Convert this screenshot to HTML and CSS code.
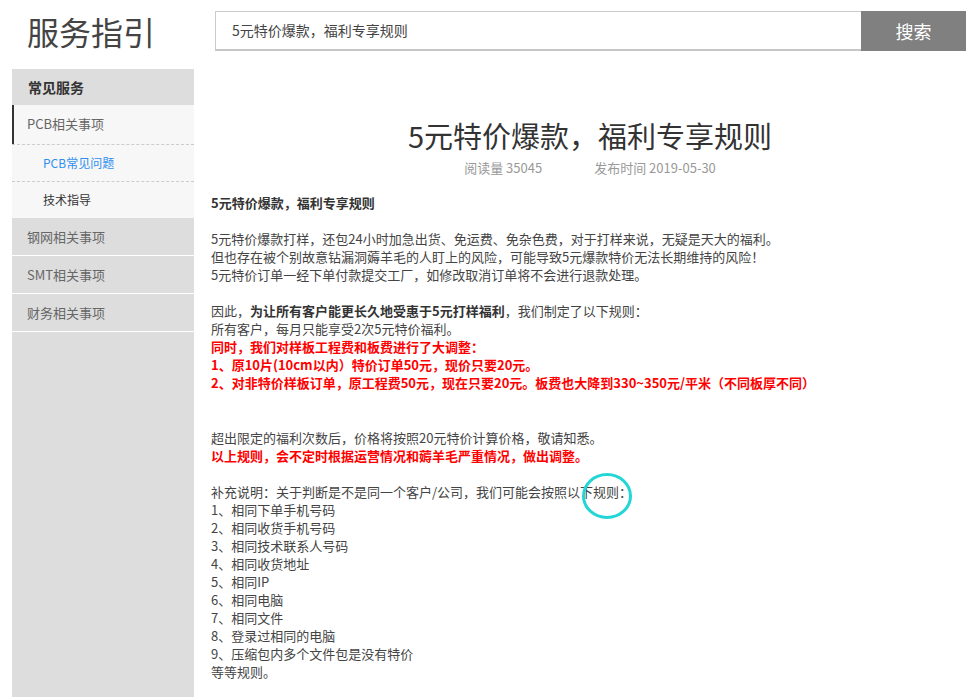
FILE: index.html
```html
<!DOCTYPE html>
<html lang="zh-CN">
<head>
<meta charset="utf-8">
<title>服务指引</title>
<link rel="stylesheet" href="styles.css">
</head>
<body>
<header class="top">
  <div class="logo">服务指引</div>
  <form class="search">
    <div class="search-input">5元特价爆款，福利专享规则</div>
    <button type="button" class="search-btn">搜索</button>
  </form>
</header>
<div class="page">
  <aside class="side">
    <div class="side-head">常见服务</div>
    <div class="group active">
      <div class="group-title">PCB相关事项</div>
      <div class="sub current">PCB常见问题</div>
      <div class="sub">技术指导</div>
    </div>
    <div class="group"><div class="group-title">钢网相关事项</div></div>
    <div class="group"><div class="group-title">SMT相关事项</div></div>
    <div class="group"><div class="group-title">财务相关事项</div></div>
  </aside>
  <main class="main">
    <h1 class="title">5元特价爆款，福利专享规则</h1>
    <div class="meta"><span>阅读量 35045</span><span>发布时间 2019-05-30</span></div>
    <div class="article">
      <p><b>5元特价爆款，福利专享规则</b></p>
      <p>5元特价爆款打样，还包24小时加急出货、免运费、免杂色费，对于打样来说，无疑是天大的福利。<br>但也存在被个别故意钻漏洞薅羊毛的人盯上的风险，可能导致5元爆款特价无法长期维持的风险！<br>5元特价订单一经下单付款提交工厂，如修改取消订单将不会进行退款处理。</p>
      <p class="gap2">因此，<b>为让所有客户能更长久地受惠于5元打样福利</b>，我们制定了以下规则：<br>所有客户，每月只能享受2次5元特价福利。<br><b class="red">同时，我们对样板工程费和板费进行了大调整：</b><br><b class="red">1、原10片(10cm以内）特价订单50元，现价只要20元。</b><br><b class="red">2、对非特价样板订单，原工程费50元，现在只要20元。板费也大降到330~350元/平米（不同板厚不同）</b></p>
      <p>超出限定的福利次数后，价格将按照20元特价计算价格，敬请知悉。<br><b class="red">以上规则，会不定时根据运营情况和薅羊毛严重情况，做出调整。</b></p>
      <p>补充说明：关于判断是不是同一个客户/公司，我们可能会按照以下规则：<br>1、相同下单手机号码<br>2、相同收货手机号码<br>3、相同技术联系人号码<br>4、相同收货地址<br>5、相同IP<br>6、相同电脑<br>7、相同文件<br>8、登录过相同的电脑<br>9、压缩包内多个文件包是没有特价<br>等等规则。</p>
    </div>
  </main>
</div>
<svg class="mark" width="56" height="50" viewBox="0 0 56 50"><ellipse cx="28" cy="25" rx="23.5" ry="21.5" fill="none" stroke="#22d6d6" stroke-width="3"/></svg>
</body>
</html>
```
FILE: styles.css
```css
* { box-sizing: border-box; }
html, body { margin: 0; padding: 0; }
body {
  font-family: "Microsoft YaHei", "Noto Sans CJK SC", "Noto Sans", sans-serif;
  color: #444;
  background: #fff;
  width: 980px;
  height: 697px;
  overflow: hidden;
  position: relative;
}
.top {
  display: flex;
  align-items: center;
  height: 69px;
  padding-top: 4px;
}
.logo {
  width: 215px;
  padding-left: 27px;
  font-size: 32px;
  color: #444;
  line-height: 40px;
  margin-top: -12px;
}
.search {
  display: flex;
  margin: 0;
  margin-top: -12px;
  height: 40px;
}
.search-input {
  width: 646px;
  height: 40px;
  border: 1px solid #ccc;
  border-bottom: 2px solid #c6c6c6;
  border-right: none;
  padding-left: 16px;
  font-size: 14px;
  line-height: 37px;
  color: #444;
}
.search-btn {
  width: 105px;
  height: 40px;
  border: none;
  background: #808080;
  color: #fff;
  font-family: inherit;
  font-size: 18px;
  padding: 0;
}
.page {
  display: flex;
  height: 628px;
}
.side {
  margin-left: 12px;
  width: 182px;
  background: #dddddd;
  font-size: 13px;
}
.side-head {
  height: 36px;
  line-height: 36px;
  padding-left: 16px;
  font-size: 14px;
  font-weight: bold;
  color: #333;
}
.group {
  border-bottom: 1px solid #fff;
}
.group-title {
  height: 37px;
  line-height: 37px;
  padding-left: 15px;
  color: #666;
}
.group.active {
  background: #f7f7f7;
  border-bottom: none;
}
.group.active .group-title {
  border-left: 2px solid #333;
  padding-left: 13px;
  height: 39px;
  line-height: 38px;
}
.sub {
  height: 37px;
  line-height: 36px;
  padding-left: 31px;
  font-size: 12px;
  color: #333;
  border-top: 1px dashed #ccc;
}
.sub.current { color: #2f8ff0; }
.main {
  flex: 1;
  padding: 46px 11px 0 17px;
}
.title {
  margin: 0;
  text-align: center;
  font-size: 29px;
  font-weight: normal;
  color: #333;
  line-height: 40px;
}
.meta {
  display: flex;
  justify-content: center;
  gap: 52px;
  font-size: 13px;
  color: #999;
  line-height: 20px;
  margin-top: 3px;
}
.article {
  margin-top: 16px;
  font-size: 13px;
  line-height: 18px;
  color: #444;
}
.article p { margin: 0 0 18px; }
.article p.gap2 { margin-bottom: 37px; }
.article b { color: #333; }
.article b.red { color: #f00; }
.mark {
  position: absolute;
  left: 579px;
  top: 471px;
}
```
